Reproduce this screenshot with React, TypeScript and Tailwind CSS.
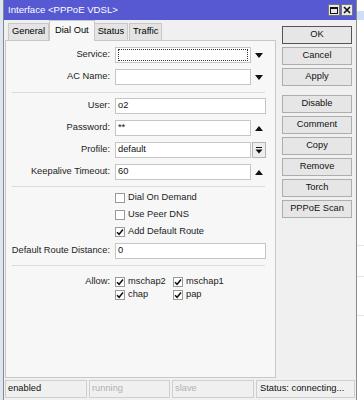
import React from "react";

const FONT = "font-['Liberation_Sans',Arial,sans-serif]";

function Arrow({ up = false }: { up?: boolean }) {
  return (
    <div className="w-[15px] h-full flex items-center justify-center">
      <svg width="8" height="5" viewBox="0 0 8 5">
        {up ? <polygon points="0,5 8,5 4,0" fill="#111" /> : <polygon points="0,0 8,0 4,5" fill="#111" />}
      </svg>
    </div>
  );
}

function Field({
  label,
  value = "",
  tail,
  focus = false,
  full = false,
  className = "",
}: {
  label: string;
  value?: string;
  tail?: React.ReactNode;
  focus?: boolean;
  full?: boolean;
  className?: string;
}) {
  return (
    <div className={`flex items-center h-[16px] ${className}`}>
      <div className="w-[105px] text-right pr-[1px] text-[#222] whitespace-nowrap">{label}</div>
      <div className="ml-[4px] flex items-center h-full">
        <div
          className={`h-full bg-white border border-[#c5c5c5] flex items-center px-[2px] ${
            full ? "w-[151px]" : "w-[136px]"
          } ${focus ? "bg-[#f3f3f3]" : ""}`}
        >
          {focus ? (
            <div className="w-full h-[12px] border border-dotted border-[#333]" />
          ) : (
            <span className="text-[#111] leading-none">{value}</span>
          )}
        </div>
        {tail}
      </div>
    </div>
  );
}

function Check({ checked }: { checked: boolean }) {
  return (
    <div className="w-[10px] h-[10px] bg-white border border-[#9a9a9a] flex items-center justify-center shrink-0">
      {checked && (
        <svg width="8" height="8" viewBox="0 0 8 8">
          <path d="M1 4.2 L3.1 6.3 L7 1.6" stroke="#111" strokeWidth="1.5" fill="none" />
        </svg>
      )}
    </div>
  );
}

function CheckRow({ label, checked }: { label: string; checked: boolean }) {
  return (
    <div className="flex items-center h-[17px] pl-[109px] gap-[3px]">
      <Check checked={checked} />
      <span className="text-[#222]">{label}</span>
    </div>
  );
}

function Sep({ className = "" }: { className?: string }) {
  return <div className={`ml-[6px] w-[253px] h-[1px] bg-[#dcdcdc] ${className}`} />;
}

function Btn({ children, def = false, className = "" }: { children: React.ReactNode; def?: boolean; className?: string }) {
  return (
    <div
      className={`h-[18px] w-[70px] flex items-center justify-center bg-[#e6e6e6] border ${
        def ? "border-[#555]" : "border-[#adadad]"
      } text-[#111] ${className}`}
    >
      {children}
    </div>
  );
}

export default function App() {
  const allow = [
    ["mschap2", "mschap1"],
    ["chap", "pap"],
  ];
  return (
    <div className={`w-[364px] h-[400px] overflow-hidden flex bg-white text-[9.3px] ${FONT}`}>
      {/* background left */}
      <div className="w-[3px] h-full bg-[#dce6f1]" />

      {/* window */}
      <div className="w-[354px] h-full flex flex-col bg-[#f0f0f0] border-x border-[#8a8a8a]">
        {/* title bar */}
        <div className="h-[20px] shrink-0 bg-[#5659d2] flex items-center pl-[4px] pr-[3px]">
          <span className="text-white text-[9.6px]">Interface &lt;PPPoE VDSL&gt;</span>
          <div className="ml-auto flex gap-[1px]">
            <div className="w-[12px] h-[12px] bg-[#e9e9e9] border border-[#777] flex items-center justify-center">
              <div className="w-[8px] h-[7px] border border-[#111] border-t-2" />
            </div>
            <div className="w-[12px] h-[12px] bg-[#e9e9e9] border border-[#777] flex items-center justify-center">
              <svg width="8" height="8" viewBox="0 0 8 8">
                <path d="M1 1 L7 7 M7 1 L1 7" stroke="#111" strokeWidth="1.6" />
              </svg>
            </div>
          </div>
        </div>

        {/* body */}
        <div className="flex flex-1">
          <div className="ml-[1px] w-[271px] flex flex-col">
            {/* tabs */}
            <div className="h-[20px] flex items-end pl-[3px] relative z-10">
              <div className="h-[17px] px-[3px] flex items-center bg-[#e4e4e4] border border-b-0 border-[#c8c8c8]">General</div>
              <div className="h-[21px] px-[5px] -mb-[1px] flex items-center bg-[#f7f7f7] border border-b-0 border-[#c8c8c8]">
                Dial Out
              </div>
              <div className="h-[17px] px-[3px] flex items-center bg-[#e4e4e4] border border-b-0 border-l-0 border-[#c8c8c8]">Status</div>
              <div className="h-[17px] px-[3px] ml-[1px] flex items-center bg-[#e4e4e4] border border-b-0 border-[#c8c8c8]">Traffic</div>
            </div>
            {/* panel */}
            <div className="h-[338px] bg-[#f7f7f7] border border-[#c8c8c8] pt-[6px] flex flex-col">
              <Field label="Service:" focus tail={<Arrow />} />
              <Field label="AC Name:" tail={<Arrow />} className="mt-[6px]" />
              <Sep className="mt-[7px]" />
              <Field label="User:" value="o2" full className="mt-[5px]" />
              <Field label="Password:" value="**" tail={<Arrow up />} className="mt-[6px]" />
              <Field
                label="Profile:"
                value="default"
                className="mt-[6px]"
                tail={
                  <div className="ml-[1px] w-[14px] h-full bg-[#eeeeee] border border-[#b5b5b5] flex items-center justify-center">
                    <svg width="8" height="8" viewBox="0 0 8 8">
                      <path d="M1 1.5 H7" stroke="#111" strokeWidth="1" />
                      <polygon points="0.5,3.5 7.5,3.5 4,7.5" fill="#111" />
                    </svg>
                  </div>
                }
              />
              <Field label="Keepalive Timeout:" value="60" tail={<Arrow up />} className="mt-[6px]" />
              <Sep className="mt-[6px]" />
              <div className="mt-[2px]">
                <CheckRow label="Dial On Demand" checked={false} />
                <CheckRow label="Use Peer DNS" checked={false} />
                <CheckRow label="Add Default Route" checked />
              </div>
              <Field label="Default Route Distance:" value="0" full className="mt-[3px]" />
              <Sep className="mt-[6px]" />
              <div className="mt-[9px] flex">
                <div className="w-[105px] text-right pr-[1px] h-[13px] flex items-center justify-end text-[#222]">Allow:</div>
                <div className="ml-[4px] flex flex-col">
                  {allow.map((row) => (
                    <div key={row[0]} className="flex h-[13px] items-center">
                      {row.map((n) => (
                        <div key={n} className="w-[58px] flex items-center gap-[3px]">
                          <Check checked />
                          <span className="text-[#222]">{n}</span>
                        </div>
                      ))}
                    </div>
                  ))}
                </div>
              </div>
            </div>
          </div>

          {/* buttons */}
          <div className="ml-[6px] pt-[6px] flex flex-col gap-[3px]">
            <Btn def>OK</Btn>
            <Btn>Cancel</Btn>
            <Btn>Apply</Btn>
            <Btn className="mt-[6px]">Disable</Btn>
            <Btn>Comment</Btn>
            <Btn>Copy</Btn>
            <Btn>Remove</Btn>
            <Btn>Torch</Btn>
            <Btn>PPPoE Scan</Btn>
          </div>
        </div>

        {/* status bar */}
        <div className="h-[22px] shrink-0 flex gap-[2px] pl-[1px] pt-[2px]">
          <div className="w-[82px] h-[18px] border border-[#cfcfcf] flex items-center px-[2px] text-[#111]">enabled</div>
          <div className="w-[81px] h-[18px] border border-[#cfcfcf] flex items-center px-[2px] text-[#b0b0b0]">running</div>
          <div className="w-[82px] h-[18px] border border-[#cfcfcf] flex items-center px-[2px] text-[#b0b0b0]">slave</div>
          <div className="w-[99px] h-[18px] border border-[#cfcfcf] flex items-center px-[3px] text-[#111]">Status: connecting...</div>
        </div>
      </div>

      {/* background right */}
      <div className="flex-1 h-full flex flex-col">
        <div className="mt-[11px] h-[9px] bg-[#cfe0f3]" />
        <div className="mt-[225px] h-[1px] bg-[#e6e6e6]" />
        <div className="mt-[30px] h-[1px] bg-[#e6e6e6]" />
        <div className="mt-[38px] h-[1px] bg-[#e6e6e6]" />
      </div>
    </div>
  );
}
